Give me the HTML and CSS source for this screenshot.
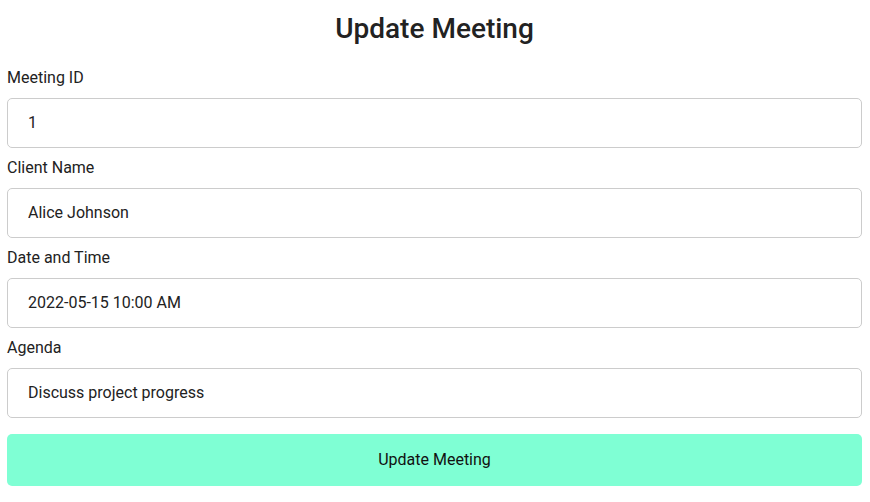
FILE: index.html
```html
<!DOCTYPE html>
<html lang="en">
<head>
<meta charset="utf-8">
<title>Update Meeting</title>
<link rel="stylesheet" href="styles.css">
</head>
<body>
<div class="page">
  <h1 class="title">Update Meeting</h1>
  <form class="form">
    <label class="label" for="mid">Meeting ID</label>
    <input class="field" id="mid" type="text" value="1">
    <label class="label" for="client">Client Name</label>
    <input class="field" id="client" type="text" value="Alice Johnson">
    <label class="label" for="dt">Date and Time</label>
    <input class="field" id="dt" type="text" value="2022-05-15 10:00 AM">
    <label class="label" for="agenda">Agenda</label>
    <input class="field" id="agenda" type="text" value="Discuss project progress">
    <button class="submit" type="button">Update Meeting</button>
  </form>
</div>
</body>
</html>
```
FILE: styles.css
```css
* { box-sizing: border-box; }
html, body { margin: 0; padding: 0; background: #fff; }
body {
  font-family: Roboto, "Liberation Sans", sans-serif;
  color: #222;
}
.page {
  padding: 0 8px 0 7px;
}
.title {
  margin: 12px 0 23px;
  font-size: 28px;
  line-height: 33px;
  font-weight: 500;
  text-align: center;
  color: #222;
}
.form {
  display: flex;
  flex-direction: column;
}
.label {
  display: block;
  font-size: 16px;
  line-height: 20px;
  margin-bottom: 10px;
  color: #222;
}
.field {
  height: 50px;
  margin: 0 0 10px;
  padding: 0 20px 2px;
  border: 1px solid #ccc;
  border-radius: 5px;
  font-family: Roboto, "Liberation Sans", sans-serif;
  font-size: 16px;
  color: #222;
  background: #fff;
  outline: none;
}
.submit {
  margin-top: 6px;
  height: 52px;
  padding: 0 0 2px;
  border: none;
  border-radius: 5px;
  background: #7fffd4;
  font-family: Roboto, "Liberation Sans", sans-serif;
  font-size: 16px;
  color: #111;
  cursor: pointer;
}
```
